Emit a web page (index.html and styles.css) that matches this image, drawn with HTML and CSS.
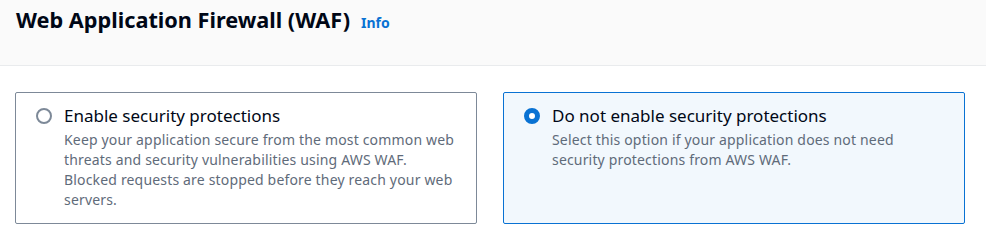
FILE: index.html
```html
<!DOCTYPE html>
<html lang="en">
<head>
  <meta charset="UTF-8" />
  <meta name="viewport" content="width=device-width, initial-scale=1.0" />
  <title>Web Application Firewall (WAF)</title>
  <link rel="stylesheet" href="styles.css">
</head>
<body>

  <div class="header">
    <h2>Web Application Firewall (WAF)</h2>
    <a class="info" href="#">Info</a>
  </div>

  <div class="tiles">
    <label class="tile">
      <span class="radio"></span>
      <span class="tile-text">
        <span class="tile-label">Enable security protections</span>
        <span class="tile-desc">Keep your application secure from the most common web threats and security vulnerabilities using AWS WAF. Blocked requests are stopped before they reach your web servers.</span>
      </span>
    </label>
    <label class="tile selected">
      <span class="radio"></span>
      <span class="tile-text">
        <span class="tile-label">Do not enable security protections</span>
        <span class="tile-desc">Select this option if your application does not need security protections from AWS WAF.</span>
      </span>
    </label>
  </div>

</body>
</html>
```

FILE: styles.css
```css
body {
  margin: 0;
  font-family: "Noto Sans", "Open Sans", Arial, sans-serif;
  background: #ffffff;
  color: #000716;
}
.header {
  display: flex;
  align-items: baseline;
  gap: 11px;
  height: 65px;
  padding: 0 16px;
  background: #fafafa;
  border-bottom: 1px solid #e9ebed;
}
.header h2 {
  margin: 0;
  padding-top: 4px;
  font-size: 21.7px;
  line-height: 32px;
  font-weight: 700;
  color: #000716;
}
.info {
  font-size: 14px;
  font-weight: 700;
  color: #0972d3;
  text-decoration: none;
}
.tiles {
  display: grid;
  grid-template-columns: 1fr 1fr;
  gap: 26px;
  padding: 26px 21px 0 15px;
}
.tile {
  display: flex;
  gap: 12px;
  padding: 11px 20px 13px;
  border: 1px solid #7d8998;
  border-radius: 2px;
  background: #ffffff;
  cursor: pointer;
}
.tile.selected {
  border-color: #0972d3;
  background: #f2f8fd;
}
.radio {
  flex: none;
  width: 16px;
  height: 16px;
  margin-top: 4px;
  box-sizing: border-box;
  border: 2px solid #7d8998;
  border-radius: 50%;
  background: #ffffff;
}
.selected .radio {
  border: 5px solid #0972d3;
}
.tile-text {
  display: flex;
  flex-direction: column;
}
.tile-label {
  font-size: 17px;
  line-height: 24px;
}
.tile-desc {
  margin-top: 2px;
  font-size: 14px;
  line-height: 20px;
  letter-spacing: 0.17px;
  color: #5f6b7a;
}
```
